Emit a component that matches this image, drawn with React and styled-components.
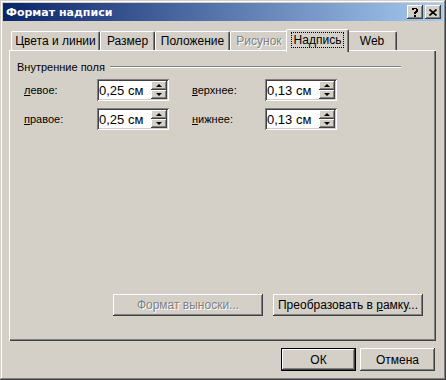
import React from "react";
import styled, { createGlobalStyle, css } from "styled-components";

const Global = createGlobalStyle`
    html, body { margin:0; padding:0; background:#d4d0c8; }
    body { font-family:"Liberation Sans", "DejaVu Sans", sans-serif; font-size:11px; color:#000; }
    * { box-sizing:border-box; }
`

const raised = css`
    box-shadow: inset -1px -1px #404040, inset 1px 1px #ffffff, inset -2px -2px #808080, inset 2px 2px #d4d0c8;
`
const sunken = css`
    box-shadow: inset 1px 1px #808080, inset -1px -1px #ffffff, inset 2px 2px #404040, inset -2px -2px #d4d0c8;
`

const Window = styled.div`
    width:446px;
    height:380px;
    padding:3px;
    background:#d4d0c8;
    display:flex;
    flex-direction:column;
    box-shadow: inset -1px -1px #404040, inset 1px 1px #d4d0c8, inset -2px -2px #808080, inset 2px 2px #ffffff;
`
const TitleBar = styled.div`
    height:18px;
    display:flex;
    align-items:center;
    padding:0 2px 0 3px;
    background:linear-gradient(to right, #0a246a, #a6caf0);
    color:#fff;
    font-family:"DejaVu Sans", sans-serif;
    font-weight:bold;
    font-size:11px;
`
const Caption = styled.span`
    flex:1;
`
const CapButton = styled.div`
    width:16px;
    height:14px;
    margin-left:${p => p.gap || 0}px;
    background:#d4d0c8;
    color:#000;
    display:flex;
    align-items:center;
    justify-content:center;
    ${raised}
`
const Body = styled.div`
    padding:8px 7px 0 6px;
    display:flex;
    flex-direction:column;
`
const TabRow = styled.div`
    display:flex;
    align-items:flex-end;
    height:21px;
    padding-left:2px;
`
const Tab = styled.div`
    position:relative;
    width:${p => p.w}px;
    height:${p => (p.active ? 23 : 19)}px;
    margin:${p => (p.active ? "0 -2px -2px -2px" : "0")};
    z-index:${p => (p.active ? 2 : 1)};
    background:#d4d0c8;
    border-top:1px solid #fff;
    border-left:1px solid #fff;
    border-right:1px solid #404040;
    border-radius:2px 2px 0 0;
    box-shadow: inset -1px 0 #808080;
    display:flex;
    align-items:flex-start;
    justify-content:center;
    padding-top:${p => (p.active ? 3 : 2)}px;
    color:${p => (p.disabled ? "#808080" : "#000")};
    text-shadow:${p => (p.disabled ? "1px 1px #ffffff" : "none")};
    font-size:12px;
`
const Focus = styled.span`
    outline:1px dotted #000;
    padding:0 2px;
    line-height:14px;
`
const Panel = styled.div`
    height:291px;
    display:flex;
    flex-direction:column;
    padding:10px 13px 25px 7px;
    border-top:1px solid #fff;
    border-left:1px solid #fff;
    box-shadow: inset -1px -1px #404040, inset -2px -2px #808080;
`
const GroupHead = styled.div`
    display:flex;
    align-items:center;
    width:384px;
    gap:5px;
`
const GroupLine = styled.div`
    flex:1;
    height:2px;
    border-top:1px solid #808080;
    border-bottom:1px solid #fff;
`
const Fields = styled.div`
    display:grid;
    grid-template-columns:73px 72px 23px 73px 72px;
    row-gap:7px;
    margin:6px 0 0 7px;
    align-items:center;
`
const Label = styled.label`
    grid-column:${p => p.col};
`
const Spin = styled.div`
    grid-column:${p => p.col};
    height:22px;
    background:#fff;
    display:flex;
    align-items:center;
    padding:2px;
    ${sunken}
`
const SpinText = styled.span`
    flex:1;
    font-size:13px;
`
const SpinButtons = styled.div`
    width:16px;
    height:18px;
    display:flex;
    flex-direction:column;
`
const Arrow = styled.div`
    flex:1;
    background:#d4d0c8;
    display:flex;
    align-items:center;
    justify-content:center;
    ${raised}
    &::after {
        content:"";
        border-left:3px solid transparent;
        border-right:3px solid transparent;
        ${p => (p.down ? "border-top:3px solid #000;" : "border-bottom:3px solid #000;")}
    }
`
const ButtonRow = styled.div`
    margin-top:auto;
    display:flex;
    justify-content:flex-end;
    gap:10px;
`
const Button = styled.div`
    width:${p => p.w || 75}px;
    height:${p => p.h || 22}px;
    display:flex;
    align-items:center;
    justify-content:center;
    background:#d4d0c8;
    font-size:12px;
    color:${p => (p.disabled ? "#808080" : "#000")};
    text-shadow:${p => (p.disabled ? "1px 1px #ffffff" : "none")};
    ${p => p.def
        ? css`border:1px solid #000; box-shadow: inset -1px -1px #404040, inset 1px 1px #ffffff, inset -2px -2px #808080;`
        : raised}
`
const Footer = styled.div`
    display:flex;
    justify-content:flex-end;
    gap:4px;
    margin-top:7px;
    padding-right:1px;
`

function SpinBox({ col, value }) {
    return (
        <Spin col={col}>
            <SpinText>{value}</SpinText>
            <SpinButtons>
                <Arrow />
                <Arrow down />
            </SpinButtons>
        </Spin>
    )
}

export default function App() {
    return (
        <>
            <Global />
            <Window>
                <TitleBar>
                    <Caption>Формат надписи</Caption>
                    <CapButton>
                        <svg width="8" height="10" viewBox="0 0 8 10">
                            <path d="M1 1h1v-0h4v1h1v3h-1v1h-1v1h-2v-2h1v-1h1v-2h-2v1h-2z M3 8h2v2h-2z" fill="#000" />
                        </svg>
                    </CapButton>
                    <CapButton gap={2}>
                        <svg width="8" height="7" viewBox="0 0 8 7">
                            <path d="M0.5 0.5L7.5 6.5M7.5 0.5L0.5 6.5" stroke="#000" strokeWidth="1.6" />
                        </svg>
                    </CapButton>
                </TitleBar>
                <Body>
                    <TabRow>
                        <Tab w={89}>Цвета и линии</Tab>
                        <Tab w={55}>Размер</Tab>
                        <Tab w={75}>Положение</Tab>
                        <Tab w={58} disabled>Рисунок</Tab>
                        <Tab w={63} active><Focus>Надпись</Focus></Tab>
                        <Tab w={50}>Web</Tab>
                    </TabRow>
                    <Panel>
                        <GroupHead>
                            <span>Внутренние поля</span>
                            <GroupLine />
                        </GroupHead>
                        <Fields>
                            <Label col={1}><u>л</u>евое:</Label>
                            <SpinBox col={2} value="0,25 см" />
                            <Label col={4}><u>в</u>ерхнее:</Label>
                            <SpinBox col={5} value="0,13 см" />
                            <Label col={1}><u>п</u>равое:</Label>
                            <SpinBox col={2} value="0,25 см" />
                            <Label col={4}><u>н</u>ижнее:</Label>
                            <SpinBox col={5} value="0,13 см" />
                        </Fields>
                        <ButtonRow>
                            <Button w={150} disabled><span>Формат выноски...</span></Button>
                            <Button w={150}><span>Преобразовать в <u>р</u>амку...</span></Button>
                        </ButtonRow>
                    </Panel>
                    <Footer>
                        <Button def h={23}>ОК</Button>
                        <Button h={23}>Отмена</Button>
                    </Footer>
                </Body>
            </Window>
        </>
    )
}
